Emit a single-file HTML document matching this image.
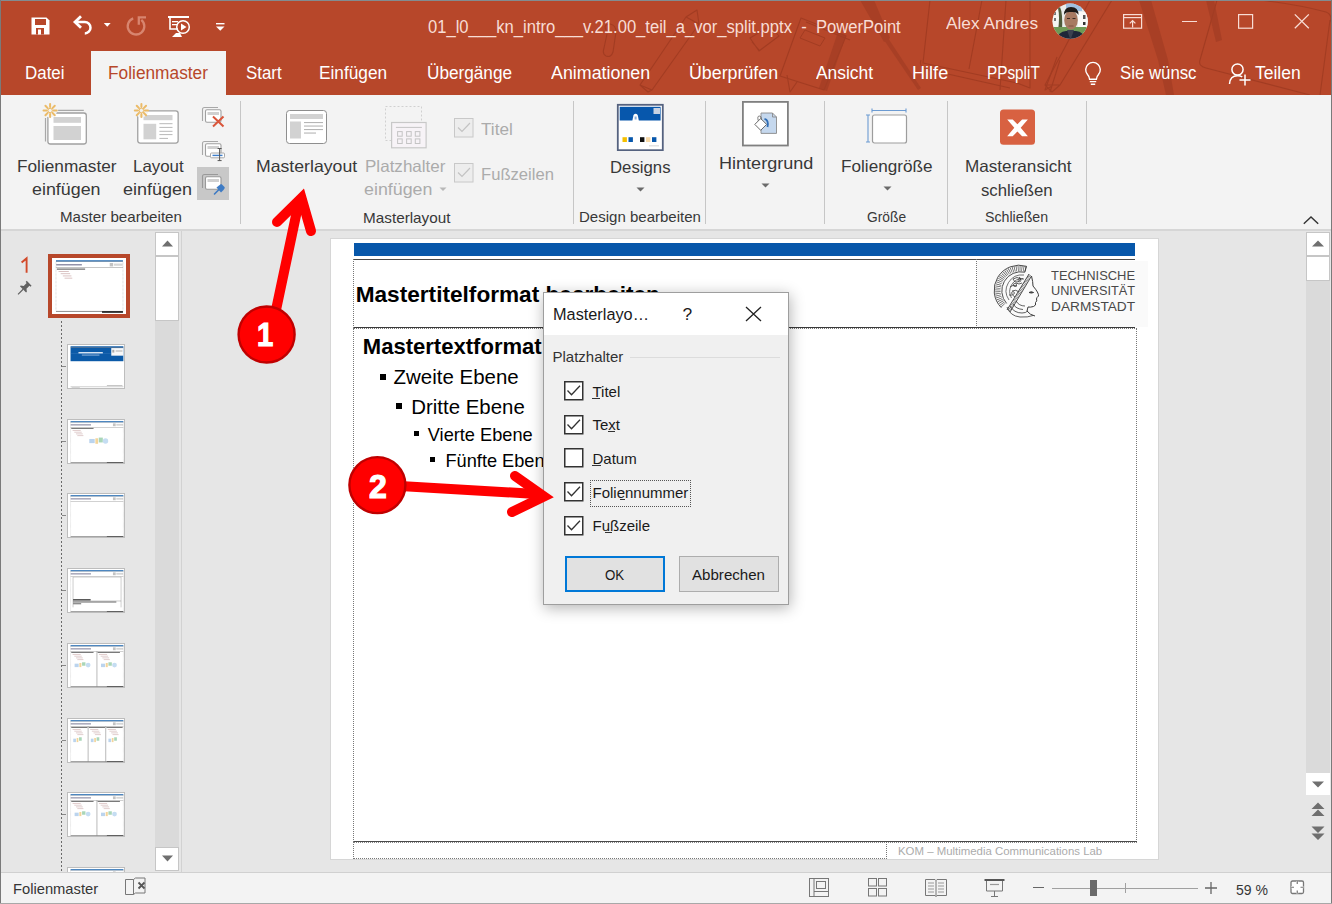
<!DOCTYPE html>
<html><head><meta charset="utf-8"><style>
html,body{margin:0;padding:0;width:1332px;height:904px;overflow:hidden;background:#E6E6E6;}
body{position:relative;font-family:"Liberation Sans",sans-serif;}
.t{position:absolute;white-space:pre;line-height:1.118;transform-origin:0 0;}
</style></head><body>
<div style="position:absolute;left:0px;top:0px;width:1332px;height:95px;background:#B7472A"></div>
<svg style="position:absolute;left:0;top:0" width="1332" height="95" viewBox="0 0 1332 95">
<g fill="none" stroke="#9C3920" stroke-width="1.1" opacity="0.75" stroke-linejoin="round">
<path d="M606 30 Q603 24 610 24 Q616 25 616 32 L613 52 Q611 58 606 56 Q602 54 604 48 L607 34"/>
<path d="M697 10 L686 17 L640 85 L648 92 L652 90 L699 24 z M686 17 L699 24 M640 85 L652 90"/>
<path d="M750 38 L770 26 L779 36 L759 51 z M752 42 L760 51"/>
<path d="M801 18 L846 36 L824 90 L780 76 z M806 22 L850 40"/>
<path d="M805 30 L825 38 L820 46 L800 38 z" stroke-width="1" />
<path d="M787 75 L790 92 L797 82" />
<path d="M930 0 L923 63 L1017 83 M982 0 L969 69 M1030 0 L1030 88 L1017 83 M921 60 Q918 68 930 70 L1010 88"/>
<path d="M1057 57 L1045 90 L1052 86 M1060 60 L1050 92"/>
<path d="M1090 0 L1045 85 L1052 92 L1060 85 L1112 0 M1045 85 L1060 85"/>
<path d="M1217 0 L1200 60 Q1198 66 1206 68 L1310 95 M1330 20 L1320 95 M1260 0 Q1300 5 1326 12 Q1333 15 1330 22"/>
<path d="M1006 0 L1000 90"/>
</g>
<g fill="#A23D24" opacity="0.7">
<path d="M838 32 L846 35 L827 91 L819 88 z"/>
<path d="M860 0 L874 0 L890 38 L884 42 z"/>
<path d="M884 40 L888 38 L921 88 L918 90 z"/>
<path d="M1139 0 L1151 0 L1168 60 L1174 95 L1166 95 L1158 60 z"/>
<path d="M1206 0 L1214 0 L1222 40 L1216 42 z"/>
</g></svg>
<div style="position:absolute;left:0px;top:0px;width:1332px;height:1px;background:#828C90"></div>
<div style="position:absolute;left:0px;top:0px;width:1px;height:904px;background:#7A7A7A"></div>
<div style="position:absolute;left:1331px;top:0px;width:1px;height:904px;background:#7A7A7A"></div>
<svg style="position:absolute;left:31px;top:17px;" width="19" height="18" viewBox="0 0 19 18"><path d="M0.5 0.5h15l3 3v14h-18z" fill="#fff"/><rect x="4" y="2" width="11" height="6" fill="#B7472A"/><rect x="5" y="11" width="8" height="6.5" fill="#B7472A"/><rect x="7" y="12.5" width="3" height="5" fill="#fff"/></svg>
<svg style="position:absolute;left:66px;top:10px;" width="30" height="30" viewBox="0 0 30 30"><path d="M15 6.3 L9 12 L15 17.7" stroke="#fff" stroke-width="2.8" fill="none" stroke-linejoin="miter"/><path d="M9.5 12 H18.8 A5.7 5.7 0 0 1 18.8 23.4" stroke="#fff" stroke-width="2.5" fill="none"/></svg>
<svg style="position:absolute;left:103px;top:22px;" width="9" height="6" viewBox="0 0 9 6"><path d="M0.8 1h6.9l-3.45 3.8z" fill="#fff"/></svg>
<svg style="position:absolute;left:120px;top:10px;" width="30" height="30" viewBox="0 0 30 30"><g stroke="#E39A86" stroke-width="2.3" fill="none" opacity="0.75"><path d="M13.2 8.4 A8.3 8.3 0 1 0 21.3 9.8"/><path d="M18.8 14.8 V7.4 H26" stroke-linejoin="miter"/></g></svg>
<svg style="position:absolute;left:167px;top:15px;" width="24" height="23" viewBox="0 0 24 23"><rect x="1" y="1" width="21" height="2" fill="#fff"/><path d="M3 3v11h8" stroke="#fff" stroke-width="1.6" fill="none"/><rect x="5" y="6" width="6" height="1.3" fill="#fff"/><rect x="5" y="9" width="6" height="1.3" fill="#fff"/><circle cx="16" cy="12" r="6.3" stroke="#fff" stroke-width="1.5" fill="none"/><path d="M14 8.5v7l5.5-3.5z" fill="#fff"/><path d="M9 18 L13 18 L15 22 H5z" fill="#fff"/></svg>
<svg style="position:absolute;left:216px;top:23px;" width="9" height="9" viewBox="0 0 9 9"><rect x="0" y="0" width="8.5" height="1.4" fill="#fff"/><path d="M0 3.5h8.5l-4.25 4.25z" fill="#fff"/></svg>
<div class="t" style="left:428.30px;top:17.64px;font-size:17.5px;color:#F8DDD5;font-weight:normal;transform:scaleX(0.9478);">01_l0___kn_intro___v.21.00_teil_a_vor_split.pptx  -  PowerPoint</div>
<div class="t" style="left:946.40px;top:13.55px;font-size:16.5px;color:#F8DDD5;font-weight:normal;transform:scaleX(1.0449);">Alex Andres</div>
<svg style="position:absolute;left:1052px;top:3px" width="37" height="37" viewBox="0 0 37 37">
<defs><clipPath id="av"><circle cx="18.2" cy="18.2" r="17.6"/></clipPath></defs>
<g clip-path="url(#av)"><rect width="37" height="37" fill="#E9ECEA"/>
<rect x="14" y="0" width="16" height="8" fill="#9FC0E0"/>
<rect x="0" y="6" width="9" height="18" fill="#F5F5F2"/><rect x="2" y="9" width="2" height="3" fill="#777"/><rect x="2" y="15" width="2" height="3" fill="#777"/>
<path d="M8 4 Q11 10 10 28 L6 28 Q8 14 6 5z" fill="#4E5A3A"/>
<rect x="26" y="9" width="11" height="16" fill="#FAFAF8"/><rect x="31" y="12" width="2.5" height="4" fill="#555"/><rect x="31" y="19" width="2.5" height="3" fill="#333"/>
<rect x="0" y="24" width="37" height="8" fill="#6E9A55"/>
<path d="M4 37 Q6 29 14 28 L24 28 Q32 29 34 37z" fill="#1E2638"/>
<path d="M15 27 L18.5 37 L22 27z" fill="#3A4150"/>
<ellipse cx="19" cy="17" rx="6.8" ry="9.5" fill="#A77A62"/>
<path d="M12 12 Q12 4 19 4 Q26.5 4 26.5 12 Q25 8.5 19 9 Q13.5 8.5 12 12z" fill="#1D1A18"/>
<path d="M15 15.5h3 M20.5 15.5h3" stroke="#3A2A22" stroke-width="1.2"/>
<path d="M16.5 23h5" stroke="#7A5040" stroke-width="0.9"/>
</g></svg>
<svg style="position:absolute;left:1122px;top:13px;" width="21" height="17" viewBox="0 0 21 17"><rect x="1.6" y="1.6" width="18" height="13.6" stroke="#F8DDD5" stroke-width="1.2" fill="none"/><path d="M1.6 4.6h18" stroke="#F8DDD5" stroke-width="1.2"/><path d="M10.6 14.6V7.6 M7.8 10.4l2.8-2.8 2.8 2.8" stroke="#F8DDD5" stroke-width="1.2" fill="none"/></svg>
<div style="position:absolute;left:1182px;top:21px;width:15px;height:1.3px;background:#F8DDD5"></div>
<svg style="position:absolute;left:1237px;top:13px;" width="17" height="17" viewBox="0 0 17 17"><rect x="1.6" y="1.6" width="14" height="13.6" stroke="#F8DDD5" stroke-width="1.2" fill="none"/></svg>
<svg style="position:absolute;left:1293px;top:13px;" width="18" height="17" viewBox="0 0 18 17"><path d="M1.8 1.4L15.8 15.2M15.8 1.4L1.8 15.2" stroke="#F8DDD5" stroke-width="1.3"/></svg>
<div style="position:absolute;left:91px;top:51px;width:135px;height:44px;background:#F3F3F3"></div>
<div class="t" style="left:25.00px;top:64.34px;font-size:17.5px;color:#FFFFFF;font-weight:normal;transform:scaleX(0.9670);">Datei</div>
<div class="t" style="left:108.00px;top:64.34px;font-size:17.5px;color:#B7472A;font-weight:normal;transform:scaleX(0.9886);">Folienmaster</div>
<div class="t" style="left:245.90px;top:64.34px;font-size:17.5px;color:#FFFFFF;font-weight:normal;transform:scaleX(0.9635);">Start</div>
<div class="t" style="left:319.40px;top:64.34px;font-size:17.5px;color:#FFFFFF;font-weight:normal;transform:scaleX(0.9855);">Einfügen</div>
<div class="t" style="left:427.00px;top:64.34px;font-size:17.5px;color:#FFFFFF;font-weight:normal;transform:scaleX(0.9815);">Übergänge</div>
<div class="t" style="left:550.80px;top:64.34px;font-size:17.5px;color:#FFFFFF;font-weight:normal;transform:scaleX(1.0195);">Animationen</div>
<div class="t" style="left:688.80px;top:64.34px;font-size:17.5px;color:#FFFFFF;font-weight:normal;transform:scaleX(1.0177);">Überprüfen</div>
<div class="t" style="left:816.00px;top:64.34px;font-size:17.5px;color:#FFFFFF;font-weight:normal;transform:scaleX(0.9930);">Ansicht</div>
<div class="t" style="left:911.50px;top:64.34px;font-size:17.5px;color:#FFFFFF;font-weight:normal;transform:scaleX(1.0343);">Hilfe</div>
<div class="t" style="left:987.00px;top:64.34px;font-size:17.5px;color:#FFFFFF;font-weight:normal;transform:scaleX(0.8756);">PPspliT</div>
<div class="t" style="left:1119.50px;top:64.34px;font-size:17.5px;color:#FFFFFF;font-weight:normal;transform:scaleX(0.9592);">Sie wünsc</div>
<div class="t" style="left:1255.00px;top:64.34px;font-size:17.5px;color:#FFFFFF;font-weight:normal;">Teilen</div>
<svg style="position:absolute;left:1083px;top:61px;" width="20" height="26" viewBox="0 0 20 26"><path d="M4.5 13.5 A7.3 7.3 0 1 1 15.5 13.5 Q13.6 15.5 13.4 18.2 H6.6 Q6.4 15.5 4.5 13.5z" stroke="#fff" stroke-width="1.4" fill="none"/><path d="M6.8 20.6h6.4 M7.8 23.2h4.4" stroke="#fff" stroke-width="1.4"/></svg>
<svg style="position:absolute;left:1228px;top:62px;" width="26" height="25" viewBox="0 0 26 25"><circle cx="9.5" cy="7.5" r="5.6" stroke="#fff" stroke-width="1.5" fill="none"/><path d="M1.5 22 Q2 13.8 9.5 13.8 Q12.5 13.8 14.3 15" stroke="#fff" stroke-width="1.5" fill="none"/><path d="M17 12.5v11 M11.5 18h11" stroke="#fff" stroke-width="1.5"/></svg>
<div style="position:absolute;left:1px;top:95px;width:1330px;height:135px;background:#F3F3F3"></div>
<div style="position:absolute;left:1px;top:229px;width:1330px;height:2px;background:#D6D6D6"></div>
<div style="position:absolute;left:240px;top:101px;width:1px;height:123px;background:#C6C6C6"></div>
<div style="position:absolute;left:573px;top:101px;width:1px;height:123px;background:#C6C6C6"></div>
<div style="position:absolute;left:705px;top:101px;width:1px;height:123px;background:#C6C6C6"></div>
<div style="position:absolute;left:824px;top:101px;width:1px;height:123px;background:#C6C6C6"></div>
<div style="position:absolute;left:947px;top:101px;width:1px;height:123px;background:#C6C6C6"></div>
<div style="position:absolute;left:1086px;top:101px;width:1px;height:123px;background:#C6C6C6"></div>
<svg style="position:absolute;left:40px;top:102px;" width="50" height="46" viewBox="0 0 50 46">
<path d="M18.1 8.4H43.8 M5.5 16V39.5" stroke="#A8A8A8" stroke-width="1.2"/>
<rect x="7.9" y="11" width="38.4" height="31" rx="2.5" fill="#fff" stroke="#A0A0A0" stroke-width="1.3"/>
<rect x="13.5" y="15" width="27.5" height="5.8" fill="#D2D2D2"/>
<rect x="13.5" y="24" width="27.5" height="14" fill="#D2D2D2"/>
<circle cx="10.1" cy="8.5" r="7" fill="#F3F3F3"/><path d="M13.50 8.50L16.70 8.50M12.50 10.90L14.77 13.17M10.10 11.90L10.10 15.10M7.70 10.90L5.43 13.17M6.70 8.50L3.50 8.50M7.70 6.10L5.43 3.83M10.10 5.10L10.10 1.90M12.50 6.10L14.77 3.83" stroke="#EBBB68" stroke-width="2" stroke-linecap="round"/><circle cx="10.1" cy="8.5" r="2.2" fill="none" stroke="#EBBB68" stroke-width="1"/></svg>
<div class="t" style="left:16.90px;top:157.35px;font-size:16.5px;color:#383838;font-weight:normal;transform:scaleX(1.0435);">Folienmaster</div>
<div class="t" style="left:31.90px;top:180.45px;font-size:16.5px;color:#383838;font-weight:normal;transform:scaleX(1.0821);">einfügen</div>
<svg style="position:absolute;left:132px;top:102px;" width="50" height="46" viewBox="0 0 50 46">
<rect x="5.75" y="8.85" width="40.4" height="32.2" rx="2.5" fill="#fff" stroke="#A0A0A0" stroke-width="1.3"/>
<rect x="11.5" y="13" width="29" height="5.2" fill="#D2D2D2"/>
<rect x="11.5" y="21.8" width="12.7" height="15.5" fill="#D2D2D2"/>
<g stroke="#B8B8B8" stroke-width="1"><path d="M27.4 21.7H40.5 M27.4 25.4H40.5 M27.4 29.3H40.5 M27.4 32.6H40.5 M27.4 36.4H36"/></g>
<circle cx="9.4" cy="8.5" r="7" fill="#F3F3F3"/><path d="M12.80 8.50L16.00 8.50M11.80 10.90L14.07 13.17M9.40 11.90L9.40 15.10M7.00 10.90L4.73 13.17M6.00 8.50L2.80 8.50M7.00 6.10L4.73 3.83M9.40 5.10L9.40 1.90M11.80 6.10L14.07 3.83" stroke="#EBBB68" stroke-width="2" stroke-linecap="round"/><circle cx="9.4" cy="8.5" r="2.2" fill="none" stroke="#EBBB68" stroke-width="1"/></svg>
<div class="t" style="left:133.30px;top:157.35px;font-size:16.5px;color:#383838;font-weight:normal;transform:scaleX(1.0232);">Layout</div>
<div class="t" style="left:123.30px;top:180.45px;font-size:16.5px;color:#383838;font-weight:normal;transform:scaleX(1.0916);">einfügen</div>
<svg style="position:absolute;left:200px;top:105px;" width="27" height="24" viewBox="0 0 27 24"><path d="M2.5 16V4.5 Q2.5 2.5 4.5 2.5H18" stroke="#A8A8A8" stroke-width="1.1" fill="none"/>
<rect x="5.5" y="4.7" width="15.5" height="12.5" rx="1.5" fill="#fff" stroke="#A0A0A0" stroke-width="1.1"/><rect x="7.5" y="7" width="11.5" height="3" fill="#D0D0D0"/>
<path d="M13 11.5l10.5 10 M23.5 11.5l-10.5 10" stroke="#D9553A" stroke-width="2"/></svg>
<svg style="position:absolute;left:200px;top:139px;" width="27" height="24" viewBox="0 0 27 24"><path d="M2.5 16V4.5 Q2.5 2.5 4.5 2.5H18" stroke="#A8A8A8" stroke-width="1.1" fill="none"/>
<rect x="5.5" y="4.7" width="15.5" height="12.5" rx="1.5" fill="#fff" stroke="#A0A0A0" stroke-width="1.1"/><rect x="7.5" y="7" width="11.5" height="3" fill="#D0D0D0"/>
<rect x="10.5" y="14" width="14" height="4.8" rx="1" fill="#fff" stroke="#A8A8A8" stroke-width="1"/><path d="M12.5 16.4h10" stroke="#3E7FCC" stroke-width="1.4"/>
<path d="M19.6 9.5V21.6 M17.6 9.5h4 M17.6 21.6h4" stroke="#555" stroke-width="1"/></svg>
<div style="position:absolute;left:197px;top:167px;width:32px;height:33px;background:#C8C8C8"></div>
<svg style="position:absolute;left:200px;top:172px;" width="27" height="26" viewBox="0 0 27 26"><path d="M2.5 16V4.5 Q2.5 2.5 4.5 2.5H18" stroke="#999" stroke-width="1.1" fill="none"/>
<rect x="5.5" y="4.7" width="15.5" height="12.5" rx="1.5" fill="#fff" stroke="#999" stroke-width="1.1"/><rect x="7.5" y="7" width="11.5" height="3" fill="#D0D0D0"/>
<path d="M14.5 22l4.5-4.5" stroke="#3E7BC4" stroke-width="1.6" stroke-linecap="round"/>
<path d="M16.5 15.5 L19 13.5 L21 12 L22 12.5 L24.5 15 L24.8 16 L23.5 18 L21 20.5z" fill="#3E7BC4"/></svg>
<div class="t" style="left:59.70px;top:210.23px;font-size:14.2px;color:#383838;font-weight:normal;transform:scaleX(1.0660);">Master bearbeiten</div>
<svg style="position:absolute;left:285px;top:109px;" width="43" height="36" viewBox="0 0 43 36"><rect x="1.5" y="1.5" width="40" height="33" rx="3" fill="#fff" stroke="#8E8E8E"/>
<rect x="5" y="5" width="33" height="5" fill="#D2D2D2"/><rect x="5" y="12.5" width="11" height="17" fill="#D2D2D2"/>
<g fill="#B5B5B5"><rect x="19" y="13" width="19" height="1.1"/><rect x="19" y="16.5" width="19" height="1.1"/><rect x="19" y="20" width="19" height="1.1"/><rect x="19" y="23.5" width="12" height="1.1"/></g></svg>
<div class="t" style="left:255.80px;top:157.35px;font-size:16.5px;color:#383838;font-weight:normal;transform:scaleX(1.0704);">Masterlayout</div>
<svg style="position:absolute;left:384px;top:105px;" width="45" height="45" viewBox="0 0 45 45"><rect x="1.5" y="1.5" width="36" height="34" fill="none" stroke="#D0D0D0" stroke-dasharray="2,2"/>
<rect x="7.6" y="17.5" width="34.5" height="25.3" fill="#F7F3F7" stroke="#C8C8C8" stroke-width="1.2"/><path d="M11.9 22.4H37.9" stroke="#C4C4C4" stroke-width="1"/>
<g fill="none" stroke="#C4C4C4" stroke-width="1"><rect x="13.6" y="26.6" width="4.6" height="4.6"/><rect x="22.6" y="26.6" width="4.6" height="4.6"/><rect x="31.3" y="26.6" width="4.6" height="4.6"/><rect x="13.6" y="33.9" width="4.6" height="4.6"/><rect x="22.6" y="33.9" width="4.6" height="4.6"/><rect x="31.3" y="33.9" width="4.6" height="4.6"/></g></svg>
<div class="t" style="left:365.00px;top:157.35px;font-size:16.5px;color:#ABABAB;font-weight:normal;transform:scaleX(1.0327);">Platzhalter</div>
<div class="t" style="left:364.30px;top:179.55px;font-size:16.5px;color:#ABABAB;font-weight:normal;transform:scaleX(1.0806);">einfügen</div>
<svg style="position:absolute;left:439px;top:187px;" width="8" height="5" viewBox="0 0 8 5"><path d="M0.5 0.5h7l-3.5 3.5z" fill="#B8B8B8"/></svg>
<svg style="position:absolute;left:454px;top:118px;" width="20" height="20" viewBox="0 0 20 20"><rect x="0.5" y="0.5" width="18.5" height="18.5" fill="#EDEDED" stroke="#C8C8C8"/><path d="M4 9.5l4 4 8-8.5" stroke="#C3C3C3" stroke-width="1.2" fill="none"/></svg>
<svg style="position:absolute;left:454px;top:163px;" width="20" height="20" viewBox="0 0 20 20"><rect x="0.5" y="0.5" width="18.5" height="18.5" fill="#EDEDED" stroke="#C8C8C8"/><path d="M4 9.5l4 4 8-8.5" stroke="#C3C3C3" stroke-width="1.2" fill="none"/></svg>
<div class="t" style="left:481.20px;top:120.05px;font-size:16.5px;color:#ABABAB;font-weight:normal;transform:scaleX(1.0409);">Titel</div>
<div class="t" style="left:481.00px;top:164.75px;font-size:16.5px;color:#ABABAB;font-weight:normal;transform:scaleX(1.0076);">Fußzeilen</div>
<div class="t" style="left:363.00px;top:210.53px;font-size:14.2px;color:#383838;font-weight:normal;transform:scaleX(1.0775);">Masterlayout</div>
<svg style="position:absolute;left:616px;top:103px;" width="48" height="48" viewBox="0 0 48 48"><rect x="1.8" y="1.8" width="45" height="45.4" fill="#fff" stroke="#55627F" stroke-width="1.8"/>
<rect x="3.7" y="3.8" width="40.9" height="13.7" fill="#0757AC"/><rect x="37.5" y="5" width="6.5" height="6" fill="#C8D2E2"/>
<path d="M16.3 18 L17.5 12 Q19.6 9.5 21.7 12 L22.9 18z" fill="#fff"/><rect x="18.6" y="13.5" width="2" height="3" fill="#8DB0DA"/>
<rect x="6.5" y="34.2" width="4.4" height="4.8" fill="#F5C000"/><rect x="12.5" y="34.2" width="4.4" height="4.8" fill="#0757AC"/>
<rect x="24" y="34.2" width="4.4" height="4.8" fill="#111"/><rect x="30" y="34.2" width="4.4" height="4.8" fill="#F7D9A8"/><rect x="36" y="34.2" width="4.4" height="4.8" fill="#0757AC"/>
<rect x="33" y="42" width="10" height="1.5" fill="#E2E2E2"/></svg>
<div class="t" style="left:610.00px;top:157.55px;font-size:16.5px;color:#383838;font-weight:normal;transform:scaleX(1.0151);">Designs</div>
<svg style="position:absolute;left:636px;top:187px;" width="9" height="5" viewBox="0 0 9 5"><path d="M0.5 0.5h8l-4 4z" fill="#6A6A6A"/></svg>
<div class="t" style="left:578.80px;top:210.23px;font-size:14.2px;color:#383838;font-weight:normal;transform:scaleX(1.0586);">Design bearbeiten</div>
<svg style="position:absolute;left:742px;top:101px;" width="47" height="46" viewBox="0 0 47 46"><rect x="0.9" y="0.9" width="45" height="43.6" fill="#fff" stroke="#808080" stroke-width="1.8"/>
<path d="M19 12H30.5L34.5 16V32.4H19z" fill="#C5D8EE" stroke="#8A8A8A" stroke-width="0.9"/><path d="M30.5 12V16H34.5" fill="none" stroke="#8A8A8A" stroke-width="0.9"/>
<path d="M12.8 23.4L18.7 17.5L24.6 23.4L18.7 29.3z" fill="#fff" stroke="#6A6A6A" stroke-width="1"/>
<path d="M16.3 19.8Q15 15 17.3 15Q19.6 15 19.4 18.8" fill="none" stroke="#6A6A6A" stroke-width="0.9"/>
<path d="M22.5 17.8Q27 19 25.5 26" fill="none" stroke="#2F6DB5" stroke-width="1.8"/></svg>
<div class="t" style="left:718.70px;top:154.25px;font-size:16.5px;color:#383838;font-weight:normal;transform:scaleX(1.0940);">Hintergrund</div>
<svg style="position:absolute;left:761px;top:183px;" width="9" height="5" viewBox="0 0 9 5"><path d="M0.5 0.5h8l-4 4z" fill="#6A6A6A"/></svg>
<svg style="position:absolute;left:865px;top:108px;" width="45" height="38" viewBox="0 0 45 38"><path d="M7 2.5h34 M7 0.5v4 M41 0.5v4" stroke="#6C9BD2" stroke-width="1.1"/>
<path d="M3 7v27 M1 7h4 M1 34h4" stroke="#6C9BD2" stroke-width="1.1"/>
<rect x="7.5" y="7" width="34" height="28" rx="2" fill="#fff" stroke="#9D9D9D" stroke-width="1.2"/></svg>
<div class="t" style="left:841.00px;top:157.45px;font-size:16.5px;color:#383838;font-weight:normal;transform:scaleX(1.0392);">Foliengröße</div>
<svg style="position:absolute;left:883px;top:186px;" width="9" height="5" viewBox="0 0 9 5"><path d="M0.5 0.5h8l-4 4z" fill="#6A6A6A"/></svg>
<div class="t" style="left:866.70px;top:210.13px;font-size:14.2px;color:#383838;font-weight:normal;transform:scaleX(0.9714);">Größe</div>
<svg style="position:absolute;left:999px;top:109px;" width="37" height="37" viewBox="0 0 37 37"><rect x="1" y="0.5" width="35" height="35.2" rx="3.5" fill="#D86141"/>
<path d="M8.2 10.6H13.7L18.4 15.3L23.1 10.6H28.9L21.7 18.7L28.9 27.2H23.1L18.4 22.5L13.7 27.2H8.2L15.3 18.7Z" fill="#fff"/></svg>
<div class="t" style="left:964.60px;top:157.05px;font-size:16.5px;color:#383838;font-weight:normal;transform:scaleX(1.0380);">Masteransicht</div>
<div class="t" style="left:981.40px;top:180.55px;font-size:16.5px;color:#383838;font-weight:normal;transform:scaleX(1.0142);">schließen</div>
<div class="t" style="left:985.00px;top:209.93px;font-size:14.2px;color:#383838;font-weight:normal;">Schließen</div>
<svg style="position:absolute;left:1302px;top:215px;" width="18" height="11" viewBox="0 0 18 11"><path d="M1.8 8.8l7.2-6.9 7.2 6.9" stroke="#333" stroke-width="1.4" fill="none"/></svg>
<div style="position:absolute;left:1px;top:231px;width:1330px;height:641px;background:#E6E6E6"></div>
<div style="position:absolute;left:155px;top:256px;width:24px;height:615px;background:#DADADA"></div>
<div style="position:absolute;left:155px;top:232px;width:24px;height:24px;background:#fff;box-sizing:border-box;border:1px solid #C6C6C6"></div>
<svg style="position:absolute;left:162px;top:240px;" width="11" height="7" viewBox="0 0 11 7"><path d="M0 6.5L5.5 0.5 11 6.5z" fill="#6F6F6F"/></svg>
<div style="position:absolute;left:155px;top:256px;width:24px;height:65px;background:#fff;box-sizing:border-box;border:1px solid #C6C6C6"></div>
<div style="position:absolute;left:155px;top:847px;width:24px;height:24px;background:#fff;box-sizing:border-box;border:1px solid #C6C6C6"></div>
<svg style="position:absolute;left:162px;top:855px;" width="11" height="7" viewBox="0 0 11 7"><path d="M0 0.5h11L5.5 6.5z" fill="#6F6F6F"/></svg>
<div style="position:absolute;left:181px;top:231px;width:1px;height:641px;background:#D2D2D2"></div>
<svg style="position:absolute;left:18px;top:254px;" width="12" height="20" viewBox="0 0 12 20"><path d="M3.6 8.6 L8.6 4.4 V18.7" stroke="#D24A2A" stroke-width="1.9" fill="none" stroke-linejoin="miter"/></svg>
<svg style="position:absolute;left:0;top:0" width="40" height="300" viewBox="0 0 40 300"><g transform="translate(22.8 289.6) rotate(45) scale(0.9)"><path d="M-3.8 -10 H3.8 V-8.3 H2.2 V-3.6 L4.8 -1.6 V-0.3 H-4.8 V-1.6 L-2.2 -3.6 V-8.3 H-3.8z" fill="#616161"/><path d="M0 -0.5 V7.5" stroke="#616161" stroke-width="1.3"/></g></svg>
<div style="position:absolute;left:48px;top:254px;width:82px;height:64px;box-sizing:border-box;border:4.5px solid #B7472A;background:#fff"></div>
<div style="position:absolute;left:61px;top:321px;width:1px;height:551px;background:repeating-linear-gradient(to bottom,#6A6A6A 0 2px,transparent 2px 4px)"></div>
<div style="position:absolute;left:53px;top:259px;width:73px;height:55px;background:#fff;overflow:hidden"><svg style="position:absolute;left:1px;top:1px" width="71" height="53" viewBox="0 0 828 622" preserveAspectRatio="none"><rect x="0" y="0" width="828" height="622" fill="#fff"/><rect x="23" y="4" width="781" height="14" fill="#0B5AA8"/><rect x="23" y="19" width="781" height="3" fill="#666"/><rect x="25" y="48" width="300" height="16" fill="#6A6A8A" opacity="0.8"/><rect x="650" y="35" width="40" height="40" fill="#999" opacity="0.6"/><rect x="700" y="42" width="100" height="26" fill="#BBB" opacity="0.6"/><rect x="23" y="87" width="781" height="4" fill="#555"/><rect x="23" y="598" width="781" height="7" fill="#444"/><rect x="560" y="600" width="244" height="20" fill="#222"/><path d="M23 22V600 M804 22V600" stroke="#999" stroke-width="5" stroke-dasharray="8 8"/><rect x="33" y="100" width="330" height="14" fill="#444" opacity="0.8"/><rect x="53" y="130" width="120" height="10" fill="#B08080" opacity="0.55"/><rect x="78" y="156" width="110" height="10" fill="#B08080" opacity="0.55"/><rect x="103" y="182" width="100" height="10" fill="#B08080" opacity="0.55"/><rect x="123" y="208" width="90" height="10" fill="#B08080" opacity="0.55"/></svg></div>
<div style="position:absolute;left:62px;top:366px;width:4px;height:1px;background:#888"></div>
<div style="position:absolute;left:67px;top:344px;width:58px;height:45px;box-sizing:border-box;border:1px solid #BDBDBD;background:#fff;overflow:hidden"><svg style="position:absolute;left:1px;top:1px" width="56" height="43" viewBox="0 0 828 622" preserveAspectRatio="none"><rect x="0" y="0" width="828" height="622" fill="#fff"/><rect x="23" y="4" width="781" height="14" fill="#0B5AA8"/><rect x="23" y="20" width="781" height="200" fill="#0B5AA8"/><rect x="23" y="15" width="781" height="4" fill="#333"/><rect x="140" y="88" width="360" height="20" fill="#E6EEF8"/><rect x="190" y="125" width="260" height="12" fill="#A9C4E6"/><rect x="23" y="112" width="600" height="3" fill="#6E9BD0"/><rect x="625" y="30" width="179" height="110" fill="#F8F8F8"/><rect x="640" y="55" width="30" height="40" fill="#AAA"/><rect x="690" y="60" width="100" height="25" fill="#CCC"/><rect x="23" y="590" width="781" height="4" fill="#555"/><rect x="560" y="565" width="230" height="12" fill="#BBB"/><rect x="40" y="600" width="120" height="6" fill="#AAA"/></svg></div>
<div style="position:absolute;left:62px;top:441px;width:4px;height:1px;background:#888"></div>
<div style="position:absolute;left:67px;top:419px;width:58px;height:45px;box-sizing:border-box;border:1px solid #BDBDBD;background:#fff;overflow:hidden"><svg style="position:absolute;left:1px;top:1px" width="56" height="43" viewBox="0 0 828 622" preserveAspectRatio="none"><rect x="0" y="0" width="828" height="622" fill="#fff"/><rect x="23" y="4" width="781" height="14" fill="#0B5AA8"/><rect x="23" y="19" width="781" height="3" fill="#666"/><rect x="25" y="48" width="300" height="16" fill="#6A6A8A" opacity="0.8"/><rect x="650" y="35" width="40" height="40" fill="#999" opacity="0.6"/><rect x="700" y="42" width="100" height="26" fill="#BBB" opacity="0.6"/><rect x="23" y="87" width="781" height="4" fill="#555"/><rect x="23" y="598" width="781" height="7" fill="#444"/><rect x="560" y="600" width="244" height="20" fill="#222"/><path d="M23 22V600 M804 22V600" stroke="#999" stroke-width="5" stroke-dasharray="8 8"/><rect x="33" y="100" width="330" height="14" fill="#444" opacity="0.8"/><rect x="53" y="130" width="120" height="10" fill="#B08080" opacity="0.55"/><rect x="78" y="156" width="110" height="10" fill="#B08080" opacity="0.55"/><rect x="103" y="182" width="100" height="10" fill="#B08080" opacity="0.55"/><rect x="123" y="208" width="90" height="10" fill="#B08080" opacity="0.55"/><rect x="300" y="260" width="80" height="60" fill="#BBD4EE"/><rect x="390" y="250" width="40" height="80" fill="#F3D49A"/><rect x="440" y="240" width="60" height="70" fill="#A9D6B8"/><circle cx="540" cy="290" r="40" fill="#C5DDF2"/></svg></div>
<div style="position:absolute;left:62px;top:515px;width:4px;height:1px;background:#888"></div>
<div style="position:absolute;left:67px;top:493px;width:58px;height:45px;box-sizing:border-box;border:1px solid #BDBDBD;background:#fff;overflow:hidden"><svg style="position:absolute;left:1px;top:1px" width="56" height="43" viewBox="0 0 828 622" preserveAspectRatio="none"><rect x="0" y="0" width="828" height="622" fill="#fff"/><rect x="23" y="4" width="781" height="14" fill="#0B5AA8"/><rect x="23" y="19" width="781" height="3" fill="#666"/><rect x="25" y="48" width="300" height="16" fill="#6A6A8A" opacity="0.8"/><rect x="650" y="35" width="40" height="40" fill="#999" opacity="0.6"/><rect x="700" y="42" width="100" height="26" fill="#BBB" opacity="0.6"/><rect x="23" y="87" width="781" height="4" fill="#555"/><rect x="23" y="598" width="781" height="7" fill="#444"/><rect x="560" y="600" width="244" height="20" fill="#222"/><path d="M23 22V600 M804 22V600" stroke="#999" stroke-width="5" stroke-dasharray="8 8"/></svg></div>
<div style="position:absolute;left:62px;top:590px;width:4px;height:1px;background:#888"></div>
<div style="position:absolute;left:67px;top:568px;width:58px;height:45px;box-sizing:border-box;border:1px solid #BDBDBD;background:#fff;overflow:hidden"><svg style="position:absolute;left:1px;top:1px" width="56" height="43" viewBox="0 0 828 622" preserveAspectRatio="none"><rect x="0" y="0" width="828" height="622" fill="#fff"/><rect x="23" y="4" width="781" height="14" fill="#0B5AA8"/><rect x="23" y="19" width="781" height="3" fill="#666"/><rect x="25" y="48" width="300" height="16" fill="#6A6A8A" opacity="0.8"/><rect x="650" y="35" width="40" height="40" fill="#999" opacity="0.6"/><rect x="700" y="42" width="100" height="26" fill="#BBB" opacity="0.6"/><rect x="23" y="87" width="781" height="4" fill="#555"/><rect x="23" y="598" width="781" height="7" fill="#444"/><rect x="560" y="600" width="244" height="20" fill="#222"/><path d="M23 22V600 M804 22V600" stroke="#999" stroke-width="5" stroke-dasharray="8 8"/><path d="M60 100V540 M770 100V540" stroke="#888" stroke-width="6"/><rect x="60" y="100" width="710" height="5" fill="#999"/><rect x="60" y="420" width="260" height="22" fill="#555"/><rect x="60" y="455" width="640" height="16" fill="#777"/><rect x="60" y="480" width="120" height="16" fill="#777"/><path d="M60 448H770" stroke="#444" stroke-width="4"/></svg></div>
<div style="position:absolute;left:62px;top:665px;width:4px;height:1px;background:#888"></div>
<div style="position:absolute;left:67px;top:643px;width:58px;height:45px;box-sizing:border-box;border:1px solid #BDBDBD;background:#fff;overflow:hidden"><svg style="position:absolute;left:1px;top:1px" width="56" height="43" viewBox="0 0 828 622" preserveAspectRatio="none"><rect x="0" y="0" width="828" height="622" fill="#fff"/><rect x="23" y="4" width="781" height="14" fill="#0B5AA8"/><rect x="23" y="19" width="781" height="3" fill="#666"/><rect x="25" y="48" width="300" height="16" fill="#6A6A8A" opacity="0.8"/><rect x="650" y="35" width="40" height="40" fill="#999" opacity="0.6"/><rect x="700" y="42" width="100" height="26" fill="#BBB" opacity="0.6"/><rect x="23" y="87" width="781" height="4" fill="#555"/><rect x="23" y="598" width="781" height="7" fill="#444"/><rect x="560" y="600" width="244" height="20" fill="#222"/><path d="M23 22V600 M804 22V600" stroke="#999" stroke-width="5" stroke-dasharray="8 8"/><path d="M413 91V600" stroke="#555" stroke-width="6"/><rect x="33" y="100" width="330" height="14" fill="#444" opacity="0.8"/><rect x="53" y="130" width="120" height="10" fill="#B08080" opacity="0.55"/><rect x="78" y="156" width="110" height="10" fill="#B08080" opacity="0.55"/><rect x="103" y="182" width="100" height="10" fill="#B08080" opacity="0.55"/><rect x="123" y="208" width="90" height="10" fill="#B08080" opacity="0.55"/><rect x="83" y="270" width="60" height="50" fill="#BBD4EE"/><rect x="153" y="260" width="30" height="60" fill="#F3D49A"/><rect x="193" y="250" width="50" height="50" fill="#A9D6B8"/><circle cx="283" cy="290" r="35" fill="#C5DDF2"/><rect x="423" y="100" width="330" height="14" fill="#444" opacity="0.8"/><rect x="443" y="130" width="120" height="10" fill="#B08080" opacity="0.55"/><rect x="468" y="156" width="110" height="10" fill="#B08080" opacity="0.55"/><rect x="493" y="182" width="100" height="10" fill="#B08080" opacity="0.55"/><rect x="513" y="208" width="90" height="10" fill="#B08080" opacity="0.55"/><rect x="473" y="270" width="60" height="50" fill="#BBD4EE"/><rect x="543" y="260" width="30" height="60" fill="#F3D49A"/><rect x="583" y="250" width="50" height="50" fill="#A9D6B8"/><circle cx="673" cy="290" r="35" fill="#C5DDF2"/></svg></div>
<div style="position:absolute;left:62px;top:740px;width:4px;height:1px;background:#888"></div>
<div style="position:absolute;left:67px;top:718px;width:58px;height:45px;box-sizing:border-box;border:1px solid #BDBDBD;background:#fff;overflow:hidden"><svg style="position:absolute;left:1px;top:1px" width="56" height="43" viewBox="0 0 828 622" preserveAspectRatio="none"><rect x="0" y="0" width="828" height="622" fill="#fff"/><rect x="23" y="4" width="781" height="14" fill="#0B5AA8"/><rect x="23" y="19" width="781" height="3" fill="#666"/><rect x="25" y="48" width="300" height="16" fill="#6A6A8A" opacity="0.8"/><rect x="650" y="35" width="40" height="40" fill="#999" opacity="0.6"/><rect x="700" y="42" width="100" height="26" fill="#BBB" opacity="0.6"/><rect x="23" y="87" width="781" height="4" fill="#555"/><rect x="23" y="598" width="781" height="7" fill="#444"/><rect x="560" y="600" width="244" height="20" fill="#222"/><path d="M23 22V600 M804 22V600" stroke="#999" stroke-width="5" stroke-dasharray="8 8"/><path d="M283 91V600 M543 91V600" stroke="#555" stroke-width="6"/><rect x="33" y="100" width="240" height="14" fill="#444" opacity="0.8"/><rect x="53" y="130" width="120" height="10" fill="#B08080" opacity="0.55"/><rect x="78" y="156" width="110" height="10" fill="#B08080" opacity="0.55"/><rect x="103" y="182" width="100" height="10" fill="#B08080" opacity="0.55"/><rect x="123" y="208" width="90" height="10" fill="#B08080" opacity="0.55"/><rect x="63" y="270" width="40" height="50" fill="#BBD4EE"/><rect x="113" y="260" width="25" height="60" fill="#F3D49A"/><rect x="148" y="250" width="40" height="50" fill="#A9D6B8"/><rect x="293" y="100" width="240" height="14" fill="#444" opacity="0.8"/><rect x="313" y="130" width="120" height="10" fill="#B08080" opacity="0.55"/><rect x="338" y="156" width="110" height="10" fill="#B08080" opacity="0.55"/><rect x="363" y="182" width="100" height="10" fill="#B08080" opacity="0.55"/><rect x="383" y="208" width="90" height="10" fill="#B08080" opacity="0.55"/><rect x="323" y="270" width="40" height="50" fill="#BBD4EE"/><rect x="373" y="260" width="25" height="60" fill="#F3D49A"/><rect x="408" y="250" width="40" height="50" fill="#A9D6B8"/><rect x="553" y="100" width="240" height="14" fill="#444" opacity="0.8"/><rect x="573" y="130" width="120" height="10" fill="#B08080" opacity="0.55"/><rect x="598" y="156" width="110" height="10" fill="#B08080" opacity="0.55"/><rect x="623" y="182" width="100" height="10" fill="#B08080" opacity="0.55"/><rect x="643" y="208" width="90" height="10" fill="#B08080" opacity="0.55"/><rect x="583" y="270" width="40" height="50" fill="#BBD4EE"/><rect x="633" y="260" width="25" height="60" fill="#F3D49A"/><rect x="668" y="250" width="40" height="50" fill="#A9D6B8"/></svg></div>
<div style="position:absolute;left:62px;top:814px;width:4px;height:1px;background:#888"></div>
<div style="position:absolute;left:67px;top:792px;width:58px;height:45px;box-sizing:border-box;border:1px solid #BDBDBD;background:#fff;overflow:hidden"><svg style="position:absolute;left:1px;top:1px" width="56" height="43" viewBox="0 0 828 622" preserveAspectRatio="none"><rect x="0" y="0" width="828" height="622" fill="#fff"/><rect x="23" y="4" width="781" height="14" fill="#0B5AA8"/><rect x="23" y="19" width="781" height="3" fill="#666"/><rect x="25" y="48" width="300" height="16" fill="#6A6A8A" opacity="0.8"/><rect x="650" y="35" width="40" height="40" fill="#999" opacity="0.6"/><rect x="700" y="42" width="100" height="26" fill="#BBB" opacity="0.6"/><rect x="23" y="87" width="781" height="4" fill="#555"/><rect x="23" y="598" width="781" height="7" fill="#444"/><rect x="560" y="600" width="244" height="20" fill="#222"/><path d="M23 22V600 M804 22V600" stroke="#999" stroke-width="5" stroke-dasharray="8 8"/><path d="M413 91V600" stroke="#555" stroke-width="6"/><rect x="33" y="100" width="330" height="14" fill="#444" opacity="0.8"/><rect x="53" y="130" width="120" height="10" fill="#B08080" opacity="0.55"/><rect x="78" y="156" width="110" height="10" fill="#B08080" opacity="0.55"/><rect x="103" y="182" width="100" height="10" fill="#B08080" opacity="0.55"/><rect x="123" y="208" width="90" height="10" fill="#B08080" opacity="0.55"/><rect x="83" y="270" width="60" height="50" fill="#BBD4EE"/><rect x="153" y="260" width="30" height="60" fill="#F3D49A"/><rect x="193" y="250" width="50" height="50" fill="#A9D6B8"/><circle cx="283" cy="290" r="35" fill="#C5DDF2"/><rect x="423" y="100" width="330" height="14" fill="#444" opacity="0.8"/><rect x="443" y="130" width="120" height="10" fill="#B08080" opacity="0.55"/><rect x="468" y="156" width="110" height="10" fill="#B08080" opacity="0.55"/><rect x="493" y="182" width="100" height="10" fill="#B08080" opacity="0.55"/><rect x="513" y="208" width="90" height="10" fill="#B08080" opacity="0.55"/><rect x="473" y="270" width="60" height="50" fill="#BBD4EE"/><rect x="543" y="260" width="30" height="60" fill="#F3D49A"/><rect x="583" y="250" width="50" height="50" fill="#A9D6B8"/><circle cx="673" cy="290" r="35" fill="#C5DDF2"/></svg></div>
<div style="position:absolute;left:62px;top:889px;width:4px;height:1px;background:#888"></div>
<div style="position:absolute;left:67px;top:867px;width:58px;height:45px;box-sizing:border-box;border:1px solid #BDBDBD;background:#fff;overflow:hidden"><svg style="position:absolute;left:1px;top:1px" width="56" height="43" viewBox="0 0 828 622" preserveAspectRatio="none"><rect x="0" y="0" width="828" height="622" fill="#fff"/><rect x="23" y="4" width="781" height="14" fill="#0B5AA8"/><rect x="23" y="19" width="781" height="3" fill="#666"/><rect x="25" y="48" width="300" height="16" fill="#6A6A8A" opacity="0.8"/><rect x="650" y="35" width="40" height="40" fill="#999" opacity="0.6"/><rect x="700" y="42" width="100" height="26" fill="#BBB" opacity="0.6"/><rect x="23" y="87" width="781" height="4" fill="#555"/><rect x="23" y="598" width="781" height="7" fill="#444"/><rect x="560" y="600" width="244" height="20" fill="#222"/><path d="M23 22V600 M804 22V600" stroke="#999" stroke-width="5" stroke-dasharray="8 8"/><path d="M413 91V600" stroke="#555" stroke-width="6"/><rect x="33" y="100" width="330" height="14" fill="#444" opacity="0.8"/><rect x="53" y="130" width="120" height="10" fill="#B08080" opacity="0.55"/><rect x="78" y="156" width="110" height="10" fill="#B08080" opacity="0.55"/><rect x="103" y="182" width="100" height="10" fill="#B08080" opacity="0.55"/><rect x="123" y="208" width="90" height="10" fill="#B08080" opacity="0.55"/><rect x="83" y="270" width="60" height="50" fill="#BBD4EE"/><rect x="153" y="260" width="30" height="60" fill="#F3D49A"/><rect x="193" y="250" width="50" height="50" fill="#A9D6B8"/><circle cx="283" cy="290" r="35" fill="#C5DDF2"/><rect x="423" y="100" width="330" height="14" fill="#444" opacity="0.8"/><rect x="443" y="130" width="120" height="10" fill="#B08080" opacity="0.55"/><rect x="468" y="156" width="110" height="10" fill="#B08080" opacity="0.55"/><rect x="493" y="182" width="100" height="10" fill="#B08080" opacity="0.55"/><rect x="513" y="208" width="90" height="10" fill="#B08080" opacity="0.55"/><rect x="473" y="270" width="60" height="50" fill="#BBD4EE"/><rect x="543" y="260" width="30" height="60" fill="#F3D49A"/><rect x="583" y="250" width="50" height="50" fill="#A9D6B8"/><circle cx="673" cy="290" r="35" fill="#C5DDF2"/></svg></div>
<div style="position:absolute;left:1px;top:872px;width:180px;height:0px;"></div>
<div style="position:absolute;left:1306px;top:280px;width:24px;height:493px;background:#DADADA"></div>
<div style="position:absolute;left:1306px;top:232px;width:24px;height:24px;background:#fff;box-sizing:border-box;border:1px solid #C6C6C6"></div>
<svg style="position:absolute;left:1312px;top:240px;" width="12" height="7" viewBox="0 0 12 7"><path d="M0 6.5L6 0.5 12 6.5z" fill="#6F6F6F"/></svg>
<div style="position:absolute;left:1306px;top:256px;width:24px;height:25px;background:#fff;box-sizing:border-box;border:1px solid #C6C6C6"></div>
<div style="position:absolute;left:1306px;top:773px;width:24px;height:22px;background:#fff"></div>
<svg style="position:absolute;left:1312px;top:781px;" width="12" height="7" viewBox="0 0 12 7"><path d="M0 0.5h12L6 6.5z" fill="#6F6F6F"/></svg>
<svg style="position:absolute;left:1311px;top:802px;" width="14" height="15" viewBox="0 0 14 15"><path d="M0.5 7L7 0.5 13.5 7z M0.5 14L7 7.5 13.5 14z" fill="#6F6F6F"/></svg>
<svg style="position:absolute;left:1311px;top:826px;" width="14" height="15" viewBox="0 0 14 15"><path d="M0.5 0.5h13L7 7z M0.5 7.5h13L7 14z" fill="#6F6F6F"/></svg>
<div style="position:absolute;left:330px;top:238px;width:829px;height:622px;background:#fff;box-sizing:border-box;border:1px solid #D6D6D6"></div>
<div style="position:absolute;left:354px;top:243px;width:781px;height:13px;background:#0757AA"></div>
<div style="position:absolute;left:354px;top:258.5px;width:781px;height:1.5px;background:#4A4A4A"></div>
<div style="position:absolute;left:353px;top:259px;width:624px;height:69px;box-sizing:border-box;border-left:1px dotted #777;border-right:1px dotted #777"></div>
<div style="position:absolute;left:977px;top:261px;width:171px;height:66px;background:#FAFAFA"></div>
<div style="position:absolute;left:354px;top:326.5px;width:781px;height:1px;background:#3A3A3A"></div>
<div style="position:absolute;left:354px;top:327.5px;width:781px;height:1px;background:repeating-linear-gradient(to right,#777 0 1px,transparent 1px 2px)"></div>
<div style="position:absolute;left:353px;top:328px;width:784px;height:514px;box-sizing:border-box;border-left:1px dotted #777;border-right:1px dotted #777"></div>
<div style="position:absolute;left:354px;top:841px;width:783px;height:1px;background:#4A4A4A"></div>
<div style="position:absolute;left:354px;top:842px;width:783px;height:1px;background:repeating-linear-gradient(to right,#888 0 1px,transparent 1px 2px)"></div>
<div style="position:absolute;left:353px;top:842px;width:534px;height:17px;box-sizing:border-box;border-left:1px dotted #777;border-right:1px dotted #777;border-bottom:1px dotted #777"></div>
<div class="t" style="left:898.40px;top:845.38px;font-size:11.5px;color:#ABABAB;font-weight:normal;transform:scaleX(0.9922);">KOM – Multimedia Communications Lab</div>
<div class="t" style="left:355.70px;top:282.30px;font-size:22.63px;color:#000;font-weight:bold;">Mastertitelformat bearbeiten</div>
<div class="t" style="left:362.80px;top:335.02px;font-size:22.05px;color:#000;font-weight:bold;">Mastertextformat bearbeiten</div>
<div style="position:absolute;left:380px;top:374px;width:6px;height:6px;background:#000"></div>
<div class="t" style="left:393.60px;top:366.25px;font-size:20.47px;color:#000;font-weight:normal;">Zweite Ebene</div>
<div style="position:absolute;left:396px;top:403px;width:6px;height:6px;background:#000"></div>
<div class="t" style="left:411.30px;top:395.50px;font-size:20.42px;color:#000;font-weight:normal;">Dritte Ebene</div>
<div style="position:absolute;left:413.5px;top:431px;width:5px;height:5px;background:#000"></div>
<div class="t" style="left:427.80px;top:424.61px;font-size:18.2px;color:#000;font-weight:normal;">Vierte Ebene</div>
<div style="position:absolute;left:430px;top:457px;width:5px;height:5px;background:#000"></div>
<div class="t" style="left:445.50px;top:450.91px;font-size:18.2px;color:#000;font-weight:normal;">Fünfte Ebene</div>
<div class="t" style="left:1050.60px;top:270.16px;font-size:12.3px;color:#4A4A4A;font-weight:normal;transform:scaleX(1.0519);">TECHNISCHE</div>
<div class="t" style="left:1050.60px;top:285.26px;font-size:12.3px;color:#484848;font-weight:normal;transform:scaleX(1.0338);">UNIVERSITÄT</div>
<div class="t" style="left:1050.60px;top:301.06px;font-size:12.3px;color:#484848;font-weight:normal;transform:scaleX(1.1124);">DARMSTADT</div>
<svg style="position:absolute;left:993px;top:263px" width="50" height="57" viewBox="0 0 50 57">
<g fill="none" stroke="#3A3A3A">
<path d="M33.5 3.3 A25 25 0 0 0 8.3 44.7" stroke-width="0.9"/>
<path d="M31.8 9.2 A19 19 0 0 0 13.6 40.4" stroke-width="0.9"/>
<path d="M32.7 6.2 A22 22 0 0 0 10.9 42.6" stroke-width="5.5" stroke-dasharray="0.7 1.1" opacity="0.85"/>
<path d="M33.5 3.3 L31.8 9.2" stroke-width="1"/>
<path d="M36 11 L14 47 M38.5 13 L17 49" stroke-width="0.9"/>
<path d="M37 12 L15.5 48" stroke-width="2.6" stroke-dasharray="0.6 0.9" opacity="0.8"/>
<path d="M20 16 q4-3 8 0 q-2 4-6 3z M17 24 q3-3 7-1 M19 28 q4-2 7 1 M16 32 q4-1 6 2 M23 20 q3 2 6 0 M26 14 q2 3 5 2" stroke-width="0.8"/>
<path d="M31 12 A16 16 0 0 0 16 37 M30 15.5 A13 13 0 0 0 18.5 35" stroke-width="0.7"/>
<circle cx="22" cy="22" r="1.6" stroke-width="0.7"/><circle cx="26.5" cy="17.5" r="1.3" stroke-width="0.7"/><circle cx="20" cy="30" r="1.4" stroke-width="0.7"/>
<path d="M38.5 13 Q40 19 40 23 Q46 30 45.5 33 Q43.5 34.5 43.5 36 Q44.5 38 42.5 39.5 Q43.5 42.5 40.5 43.5 Q37 44.5 35 44 L34 48 Q37 52 42 53" stroke-width="1"/>
<path d="M36 29.5 q2.3-1.6 4.6 0 q-2.3 1.2 -4.6 0z" stroke-width="0.9" fill="#555"/>
<path d="M14 44 Q17 53 27 54 Q35 54.5 40 52.5 M17 43 Q21 50 29 50 Q33 50 34.5 48 M20 41 Q23 46 30 46.5 M23 38 Q26 43 32 43" stroke-width="0.8"/>
</g></svg>
<div style="position:absolute;left:543px;top:292px;width:246px;height:313px;box-shadow:1px 3px 14px rgba(0,0,0,0.3);background:#F0F0F0;box-sizing:border-box;border:1px solid #9E9E9E"></div>
<div style="position:absolute;left:544px;top:293px;width:244px;height:42px;background:#fff"></div>
<div class="t" style="left:553.40px;top:305.14px;font-size:17.4px;color:#1A1A1A;font-weight:normal;transform:scaleX(0.9366);">Masterlayo…</div>
<div class="t" style="left:682.50px;top:305.14px;font-size:17.4px;color:#1A1A1A;font-weight:normal;">?</div>
<svg style="position:absolute;left:745px;top:306px;" width="17" height="16" viewBox="0 0 17 16"><path d="M1 1l15 14 M16 1L1 15" stroke="#222" stroke-width="1.3"/></svg>
<div class="t" style="left:552.50px;top:349.11px;font-size:15px;color:#333;font-weight:normal;">Platzhalter</div>
<div style="position:absolute;left:630px;top:357px;width:150px;height:1px;background:#DCDCDC"></div>
<svg style="position:absolute;left:564px;top:381px;" width="20" height="20" viewBox="0 0 20 20"><rect x="0.75" y="0.75" width="18" height="18" fill="#fff" stroke="#333" stroke-width="1.5"/><path d="M3.5 9.5l4 4.2 8.5-9" stroke="#333" stroke-width="1.3" fill="none"/></svg>
<div class="t" style="left:592.50px;top:383.81px;font-size:15px;color:#1A1A1A;font-weight:normal;">Titel</div>
<svg style="position:absolute;left:564px;top:415px;" width="20" height="20" viewBox="0 0 20 20"><rect x="0.75" y="0.75" width="18" height="18" fill="#fff" stroke="#333" stroke-width="1.5"/><path d="M3.5 9.5l4 4.2 8.5-9" stroke="#333" stroke-width="1.3" fill="none"/></svg>
<div class="t" style="left:592.50px;top:417.41px;font-size:15px;color:#1A1A1A;font-weight:normal;">Text</div>
<svg style="position:absolute;left:564px;top:448px;" width="20" height="20" viewBox="0 0 20 20"><rect x="0.75" y="0.75" width="18" height="18" fill="#fff" stroke="#333" stroke-width="1.5"/></svg>
<div class="t" style="left:592.50px;top:451.01px;font-size:15px;color:#1A1A1A;font-weight:normal;">Datum</div>
<svg style="position:absolute;left:564px;top:482px;" width="20" height="20" viewBox="0 0 20 20"><rect x="0.75" y="0.75" width="18" height="18" fill="#fff" stroke="#333" stroke-width="1.5"/><path d="M3.5 9.5l4 4.2 8.5-9" stroke="#333" stroke-width="1.3" fill="none"/></svg>
<div class="t" style="left:592.50px;top:484.61px;font-size:15px;color:#1A1A1A;font-weight:normal;">Foliennummer</div>
<svg style="position:absolute;left:564px;top:516px;" width="20" height="20" viewBox="0 0 20 20"><rect x="0.75" y="0.75" width="18" height="18" fill="#fff" stroke="#333" stroke-width="1.5"/><path d="M3.5 9.5l4 4.2 8.5-9" stroke="#333" stroke-width="1.3" fill="none"/></svg>
<div class="t" style="left:592.50px;top:518.21px;font-size:15px;color:#1A1A1A;font-weight:normal;">Fußzeile</div>
<div style="position:absolute;left:592px;top:397.7px;width:8px;height:1px;background:#333"></div>
<div style="position:absolute;left:608px;top:431.3px;width:7px;height:1px;background:#333"></div>
<div style="position:absolute;left:592px;top:464.9px;width:9px;height:1px;background:#333"></div>
<div style="position:absolute;left:620px;top:498.5px;width:5px;height:1px;background:#333"></div>
<div style="position:absolute;left:605px;top:532.1px;width:7px;height:1px;background:#333"></div>
<div style="position:absolute;left:590px;top:480px;width:101px;height:27px;box-sizing:border-box;border:1px dotted #555"></div>
<div style="position:absolute;left:565px;top:556px;width:100px;height:36px;background:#E1E1E1;box-sizing:border-box;border:2px solid #0078D7"></div>
<div class="t" style="left:604.80px;top:566.91px;font-size:15px;color:#1A1A1A;font-weight:normal;transform:scaleX(0.8868);">OK</div>
<div style="position:absolute;left:679px;top:556px;width:100px;height:36px;background:#E1E1E1;box-sizing:border-box;border:1px solid #ADADAD"></div>
<div class="t" style="left:692.30px;top:566.91px;font-size:15px;color:#1A1A1A;font-weight:normal;transform:scaleX(1.0062);">Abbrechen</div>
<svg style="position:absolute;left:0;top:0" width="1332" height="904" viewBox="0 0 1332 904">
<g stroke="#FF0000" stroke-width="10" fill="none" stroke-linecap="round" stroke-linejoin="miter" stroke-miterlimit="10">
<path d="M276 310 L298 206"/>
<path d="M277 222 L301.5 198 L311 231"/>
<path d="M400 486 L536 494"/>
<path d="M515 476 L544 496.5 L512 512"/>
</g>
<circle cx="266.6" cy="334.5" r="28" fill="#FF0000" stroke="#C00000" stroke-width="2.4"/>
<circle cx="377.4" cy="485.1" r="28" fill="#FF0000" stroke="#C00000" stroke-width="2.4"/>
</svg>
<div class="t" style="left:257.40px;top:317.40px;font-size:33px;color:#fff;font-weight:bold;transform:scaleX(0.8828);-webkit-text-stroke:1.2px #fff;">1</div>
<div class="t" style="left:368.50px;top:468.50px;font-size:33px;color:#fff;font-weight:bold;transform:scaleX(0.9700);-webkit-text-stroke:1.2px #fff;">2</div>
<div style="position:absolute;left:1px;top:872px;width:1330px;height:1px;background:#D0D0D0"></div>
<div style="position:absolute;left:1px;top:873px;width:1330px;height:30px;background:#F3F3F3"></div>
<div style="position:absolute;left:0px;top:903px;width:1332px;height:1px;background:#A8A8A8"></div>
<div class="t" style="left:13.20px;top:881.16px;font-size:14.5px;color:#363636;font-weight:normal;transform:scaleX(1.0155);">Folienmaster</div>
<svg style="position:absolute;left:124px;top:877px;" width="24" height="19" viewBox="0 0 24 19"><path d="M1.5 2.5h8v15h-8z M9.5 2.5l2-1.5h9.5v15h-9.5l-2 1.5" stroke="#777" stroke-width="1" fill="none"/><path d="M14.5 5.5l6 6 M20.5 5.5l-6 6" stroke="#555" stroke-width="1.8"/></svg>
<svg style="position:absolute;left:809px;top:878px;" width="21" height="20" viewBox="0 0 21 20"><rect x="0.5" y="0.5" width="19" height="18" fill="none" stroke="#777"/><path d="M5 0.5v18 M5 13.5h14.5" stroke="#777"/><rect x="7.5" y="3.5" width="9" height="7" fill="none" stroke="#777"/></svg>
<svg style="position:absolute;left:868px;top:878px;" width="21" height="20" viewBox="0 0 21 20"><g fill="none" stroke="#777"><rect x="0.5" y="0.5" width="8" height="7.5"/><rect x="10.5" y="0.5" width="8" height="7.5"/><rect x="0.5" y="10.5" width="8" height="7.5"/><rect x="10.5" y="10.5" width="8" height="7.5"/></g></svg>
<svg style="position:absolute;left:925px;top:878px;" width="22" height="20" viewBox="0 0 22 20"><path d="M0.5 1.5h9.5l1 1 1-1h9.5v16h-9.5l-1 1-1-1h-9.5z" fill="none" stroke="#777"/><path d="M11 2.5v16" stroke="#777"/><g stroke="#999"><path d="M3 5h6M3 8h6M3 11h6M3 14h6M13 5h6M13 8h6M13 11h6M13 14h6"/></g></svg>
<svg style="position:absolute;left:984px;top:879px;" width="21" height="19" viewBox="0 0 21 19"><path d="M0.5 1h20" stroke="#555" stroke-width="2"/><path d="M2.5 2v10h16V2" fill="none" stroke="#777"/><path d="M6 5.5h9" stroke="#999" stroke-width="1.2"/><path d="M10.5 12v5 M7 17.5h7" stroke="#777"/></svg>
<div style="position:absolute;left:1033px;top:887px;width:11px;height:1.3px;background:#666"></div>
<div style="position:absolute;left:1052px;top:887.5px;width:146px;height:1px;background:#A0A0A0"></div>
<div style="position:absolute;left:1124.5px;top:883px;width:1px;height:10px;background:#A0A0A0"></div>
<div style="position:absolute;left:1090px;top:880px;width:7px;height:16px;background:#6A6A6A"></div>
<svg style="position:absolute;left:1205px;top:882px;" width="12" height="12" viewBox="0 0 12 12"><path d="M6 0v12 M0 6h12" stroke="#666" stroke-width="1.3"/></svg>
<div class="t" style="left:1236.00px;top:880.96px;font-size:15.5px;color:#363636;font-weight:normal;transform:scaleX(0.9052);">59 %</div>
<svg style="position:absolute;left:1290px;top:880px;" width="15" height="15" viewBox="0 0 15 15"><rect x="1" y="1" width="12.5" height="12.5" rx="1.5" fill="#fff" stroke="#777" stroke-width="1.3"/><path d="M7.25 1v12.5 M1 7.25h12.5" stroke="#fff" stroke-width="2"/><path d="M7.25 1v3 M7.25 10.5v3 M1 7.25h3 M10.5 7.25h3" stroke="#777" stroke-width="1.2"/></svg>
</body></html>
